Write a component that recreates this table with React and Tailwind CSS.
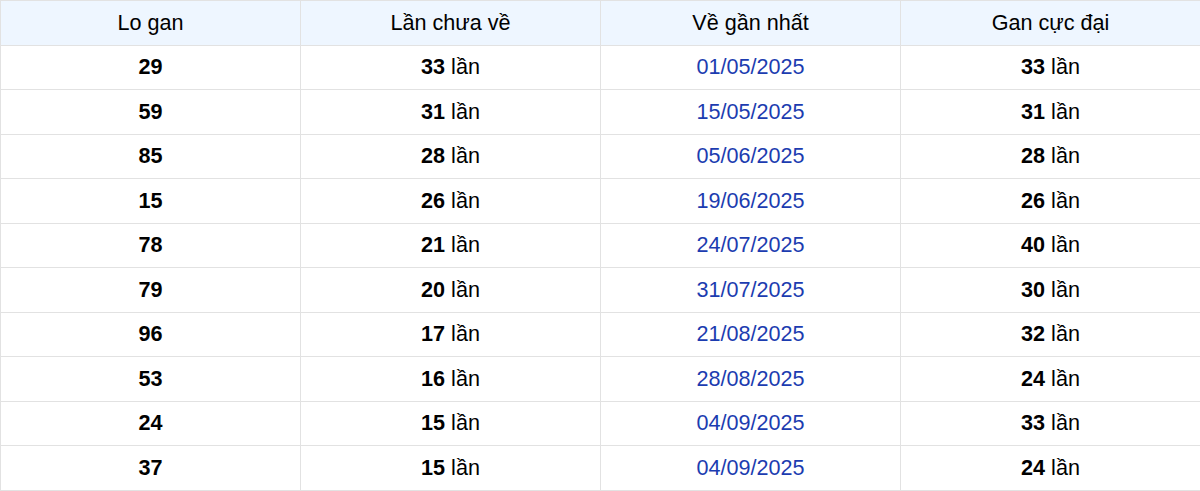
const rows = [
  ['29', '33', '01/05/2025', '33'],
  ['59', '31', '15/05/2025', '31'],
  ['85', '28', '05/06/2025', '28'],
  ['15', '26', '19/06/2025', '26'],
  ['78', '21', '24/07/2025', '40'],
  ['79', '20', '31/07/2025', '30'],
  ['96', '17', '21/08/2025', '32'],
  ['53', '16', '28/08/2025', '24'],
  ['24', '15', '04/09/2025', '33'],
  ['37', '15', '04/09/2025', '24'],
];

const cell = 'border border-[#e2e2e2] h-[44.5px] text-center align-middle p-0';

export default function App() {
  return (
    <div className="w-[1201px] bg-white text-[21.6px] text-black" style={{ fontFamily: '"Liberation Sans", Arial, sans-serif' }}>
      <table className="w-full border-collapse table-fixed">
        <thead>
          <tr className="bg-[#eef6ff]">
            <th className={`${cell} font-normal`}>Lo gan</th>
            <th className={`${cell} font-normal`}>Lần chưa về</th>
            <th className={`${cell} font-normal`}>Về gần nhất</th>
            <th className={`${cell} font-normal`}>Gan cực đại</th>
          </tr>
        </thead>
        <tbody>
          {rows.map((r, i) => (
            <tr key={i}>
              <td className={`${cell} font-bold`}>{r[0]}</td>
              <td className={cell}><span className="font-bold">{r[1]}</span> lần</td>
              <td className={`${cell} text-[#1c3cb0]`}>{r[2]}</td>
              <td className={cell}><span className="font-bold">{r[3]}</span> lần</td>
            </tr>
          ))}
        </tbody>
      </table>
    </div>
  );
}
